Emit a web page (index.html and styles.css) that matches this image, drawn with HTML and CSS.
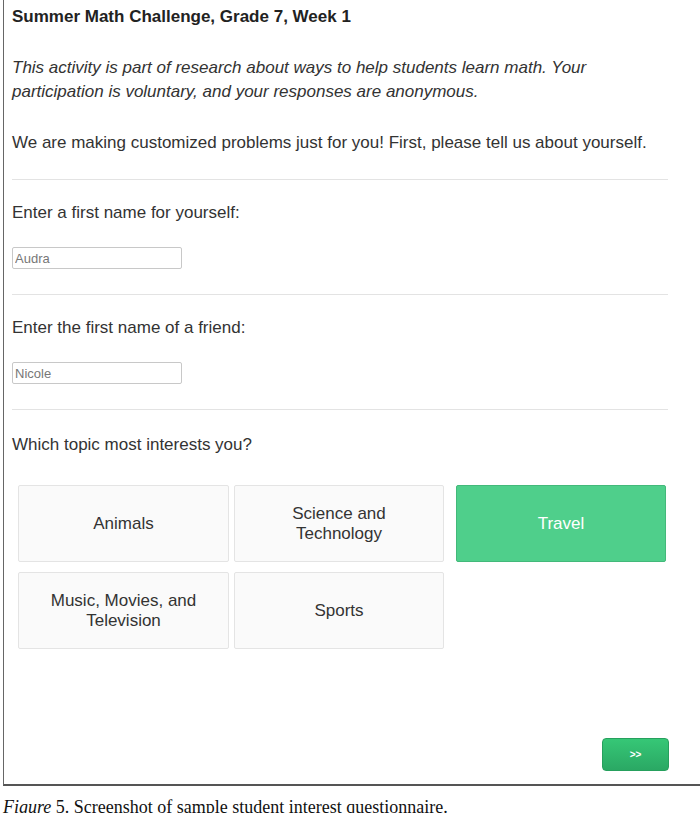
FILE: index.html
```html
<!DOCTYPE html>
<html lang="en">
<head>
   <meta charset="UTF-8">
   <title>Summer Math Challenge</title>
   <link rel="stylesheet" href="styles.css">
</head>
<body>
   <div class="frame">
      <h1 class="title">Summer Math Challenge, Grade 7, Week 1</h1>

      <p class="notice">This activity is part of research about ways to help students learn math. Your participation is voluntary, and your responses are anonymous.</p>

      <p class="intro">We are making customized problems just for you! First, please tell us about yourself.</p>

      <hr class="rule">

      <div class="question">
         <label for="selfName">Enter a first name for yourself:</label>
         <input id="selfName" class="name-input" value="Audra">
      </div>

      <hr class="rule">

      <div class="question">
         <label for="friendName">Enter the first name of a friend:</label>
         <input id="friendName" class="name-input" value="Nicole">
      </div>

      <hr class="rule">

      <div class="question question-topics">
         <p class="prompt">Which topic most interests you?</p>
         <div class="topics">
            <button class="topic">Animals</button>
            <button class="topic">Science and<br>Technology</button>
            <button class="topic topic-selected">Travel</button>
            <button class="topic">Music, Movies, and<br>Television</button>
            <button class="topic">Sports</button>
         </div>
      </div>

      <div class="footer">
         <button class="next">&gt;&gt;</button>
      </div>
   </div>

   <p class="caption"><em>Figure</em> 5. Screenshot of sample student interest questionnaire.</p>
</body>
</html>
```

FILE: styles.css
```css
* {
   box-sizing: border-box;
}

html,
body {
   margin: 0;
   padding: 0;
   background: #fff;
   overflow: hidden;
}

body {
   font-family: 'Liberation Sans', Arial, sans-serif;
   font-size: 17px;
   color: #333;
}

.frame {
   margin-left: 3px;
   height: 786px;
   border-left: 1px solid #666;
   border-bottom: 2px solid #555;
   padding: 0 32px 0 8px;
   display: flex;
   flex-direction: column;
}

.title {
   margin: 7px 0 0;
   font-size: 17px;
   line-height: 20px;
   font-weight: bold;
   color: #222;
}

.notice {
   margin: 29px 0 0;
   line-height: 24px;
   font-style: italic;
}

.intro {
   margin: 27px 0 0;
   line-height: 24px;
}

.rule {
   width: 100%;
   margin: 24px 0 0;
   border: 0;
   border-top: 1px solid #e3e3e3;
}

.question {
   display: flex;
   flex-direction: column;
   align-items: flex-start;
   margin-top: 21px;
}

.question label,
.prompt {
   margin: 0;
   line-height: 24px;
}

.name-input {
   margin: 22px 0 1px;
   width: 170px;
   height: 22px;
   padding: 0 2px;
   border: 1px solid #c8c8c8;
   border-radius: 2px;
   font-family: 'Liberation Sans', Arial, sans-serif;
   font-size: 13px;
   color: #777;
}

.question-topics {
   margin-top: 23px;
}

.topics {
   margin: 28px 0 0 6px;
   display: grid;
   grid-template-columns: 211px 210px 210px;
   grid-auto-rows: 77px;
   column-gap: 5px;
   row-gap: 10px;
}

.topic {
   padding: 0 10px;
   background: #fafafa;
   border: 1px solid #e4e4e4;
   border-radius: 2px;
   font-family: 'Liberation Sans', Arial, sans-serif;
   font-size: 17px;
   line-height: 20px;
   color: #333;
}

.topic-selected {
   width: 210px;
   margin-left: 7px;
   background: #4fcf8b;
   border-color: #43b97a;
   color: #fff;
}

.footer {
   margin-top: auto;
   margin-bottom: 13px;
   display: flex;
   justify-content: flex-end;
}

.next {
   width: 67px;
   height: 33px;
   margin-right: -1px;
   border: 1px solid #26a05d;
   border-radius: 4px;
   background: linear-gradient(#36c776, #2aa864);
   color: #fff;
   font-family: 'Liberation Sans', Arial, sans-serif;
   font-size: 10px;
   font-weight: bold;
}

.caption {
   margin: 11px 0 0 3px;
   font-family: 'Liberation Serif', 'Times New Roman', serif;
   font-size: 18px;
   line-height: 20px;
   color: #111;
}
```
